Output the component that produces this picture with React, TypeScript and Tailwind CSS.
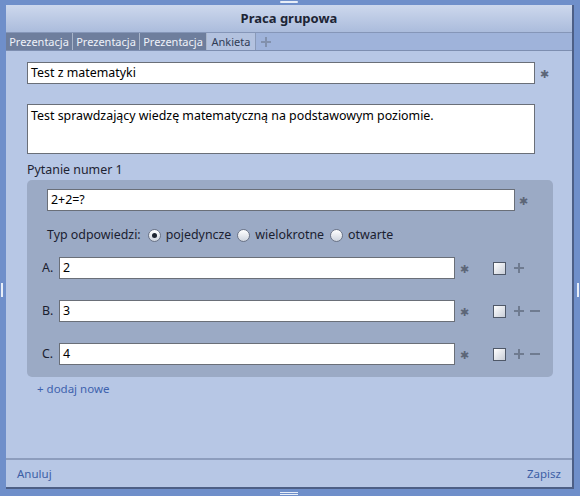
const font = { fontFamily: '"Noto Sans", "Open Sans", sans-serif' };

function Star({ className = "" }: { className?: string }) {
  return <span className={`text-[11px] leading-none text-[#5d6678] ${className}`}>✱</span>;
}

function Plus({ faded = false }: { faded?: boolean }) {
  return (
    <svg width="12" height="12" viewBox="0 0 12 12" className={faded ? "opacity-60" : ""}>
      <path d="M6 1v10M1 6h10" stroke="#6f7b90" strokeWidth="2" />
    </svg>
  );
}

function Minus() {
  return (
    <svg width="12" height="12" viewBox="0 0 12 12">
      <path d="M1 6h10" stroke="#6f7b90" strokeWidth="2" />
    </svg>
  );
}

function Radio({ checked }: { checked?: boolean }) {
  return (
    <span className="inline-flex h-[13px] w-[13px] items-center justify-center rounded-full border border-[#6b7487] bg-gradient-to-b from-white to-[#cfd5df]">
      {checked && <span className="h-[5px] w-[5px] rounded-full bg-[#1d2430]" />}
    </span>
  );
}

function Checkbox() {
  return <span className="block h-[13px] w-[13px] border border-[#4f5868] bg-gradient-to-br from-white to-[#c9ced8]" />;
}

function Field({ value, className = "" }: { value: string; className?: string }) {
  return (
    <div className={`flex h-[22px] items-center border border-[#6a6f78] bg-white pl-[3px] text-[12.4px] text-black ${className}`}>
      {value}
    </div>
  );
}

const answers = [
  { label: "A.", value: "2", minus: false },
  { label: "B.", value: "3", minus: true },
  { label: "C.", value: "4", minus: true },
];

export default function App() {
  return (
    <div className="relative h-[496px] w-[580px] bg-[#6f8fca] pl-[6px] pt-[5px]" style={font}>
      {/* resize grips */}
      <div className="absolute left-[280px] top-[1px] h-[2px] w-[18px] rounded bg-[#e8eef8]" />
      <div className="absolute left-[280px] bottom-[1px] h-[3px] w-[18px] border-y border-[#e8eef8]" />
      <div className="absolute left-[1px] top-[283px] h-[14px] w-[2px] bg-[#e8eef8]" />
      <div className="absolute right-[1px] top-[283px] h-[14px] w-[2px] bg-[#e8eef8]" />

      <div className="flex h-[484px] w-[568px] flex-col border-r-2 border-b-2 border-[#4d5f86] bg-[#b7c7e5]">
        {/* title */}
        <div className="flex h-[28px] items-center justify-center border-b border-[#8596b8] bg-gradient-to-b from-[#cdd8ed] to-[#abbcdc] text-[13px] font-bold text-[#1d2535]">
          Praca grupowa
        </div>

        {/* tabs */}
        <div className="flex h-[18px] items-stretch border-b border-[#7d8eb0] bg-[#9fb3da] text-[11px] leading-none">
          {["Prezentacja", "Prezentacja", "Prezentacja"].map((t, i) => (
            <div key={i} className="flex w-[67px] items-center justify-center border-r border-[#a8b4c9] bg-[#6e7e9d] text-[#eef2f9]">
              {t}
            </div>
          ))}
          <div className="flex w-[49px] items-center justify-center border-r border-[#8a9ab8] bg-[#b3c2df] text-[#303c55]">Ankieta</div>
          <div className="flex items-center px-[4px]">
            <Plus faded />
          </div>
        </div>

        {/* body */}
        <div className="flex flex-1 flex-col pl-[21px] pt-[11px]">
          <div className="flex items-center">
            <Field value="Test z matematyki" className="w-[508px]" />
            <Star className="ml-[5px]" />
          </div>
          <div className="mt-[20px] h-[50px] w-[508px] border border-[#6a6f78] bg-white px-[3px] pt-[2px] text-[12.4px] text-black">
            Test sprawdzający wiedzę matematyczną na podstawowym poziomie.
          </div>
          <div className="mt-[7px] text-[12.4px] leading-[18px] text-[#1d2333]">Pytanie numer 1</div>

          <div className="mt-[1px] w-[526px] rounded-[5px] bg-[#9baac5] pb-[12px] pl-[20px] pt-[9px]">
            <div className="flex items-center">
              <Field value="2+2=?" className="w-[468px]" />
              <Star className="ml-[4px]" />
            </div>
            <div className="mt-[14px] flex h-[20px] items-center gap-[5px] text-[12.4px] text-[#1a2030]">
              <span className="mr-[2px]">Typ odpowiedzi:</span>
              <Radio checked />
              <span className="mr-[1px]">pojedyncze</span>
              <Radio />
              <span className="mr-[1px]">wielokrotne</span>
              <Radio />
              <span>otwarte</span>
            </div>
            <div className="flex flex-col gap-[21px] pt-[12px]">
              {answers.map((a) => (
                <div key={a.label} className="flex items-center">
                  <span className="-ml-[5px] w-[17px] text-[12.4px] text-[#1a2030]">{a.label}</span>
                  <Field value={a.value} className="w-[396px]" />
                  <Star className="ml-[5px]" />
                  <span className="ml-[24px]">
                    <Checkbox />
                  </span>
                  <span className="ml-[7px] flex items-center gap-[4px]">
                    <Plus />
                    {a.minus && <Minus />}
                  </span>
                </div>
              ))}
            </div>
          </div>

          <div className="mt-[3px] pl-[10px] text-[11.5px] leading-[18px] text-[#3e62ad]">+ dodaj nowe</div>
        </div>

        {/* footer */}
        <div className="flex h-[29px] items-center justify-between border-t-2 border-[#8d9dbd] px-[11px] text-[11.5px] text-[#3d5fa6]">
          <span>Anuluj</span>
          <span>Zapisz</span>
        </div>
      </div>
    </div>
  );
}
